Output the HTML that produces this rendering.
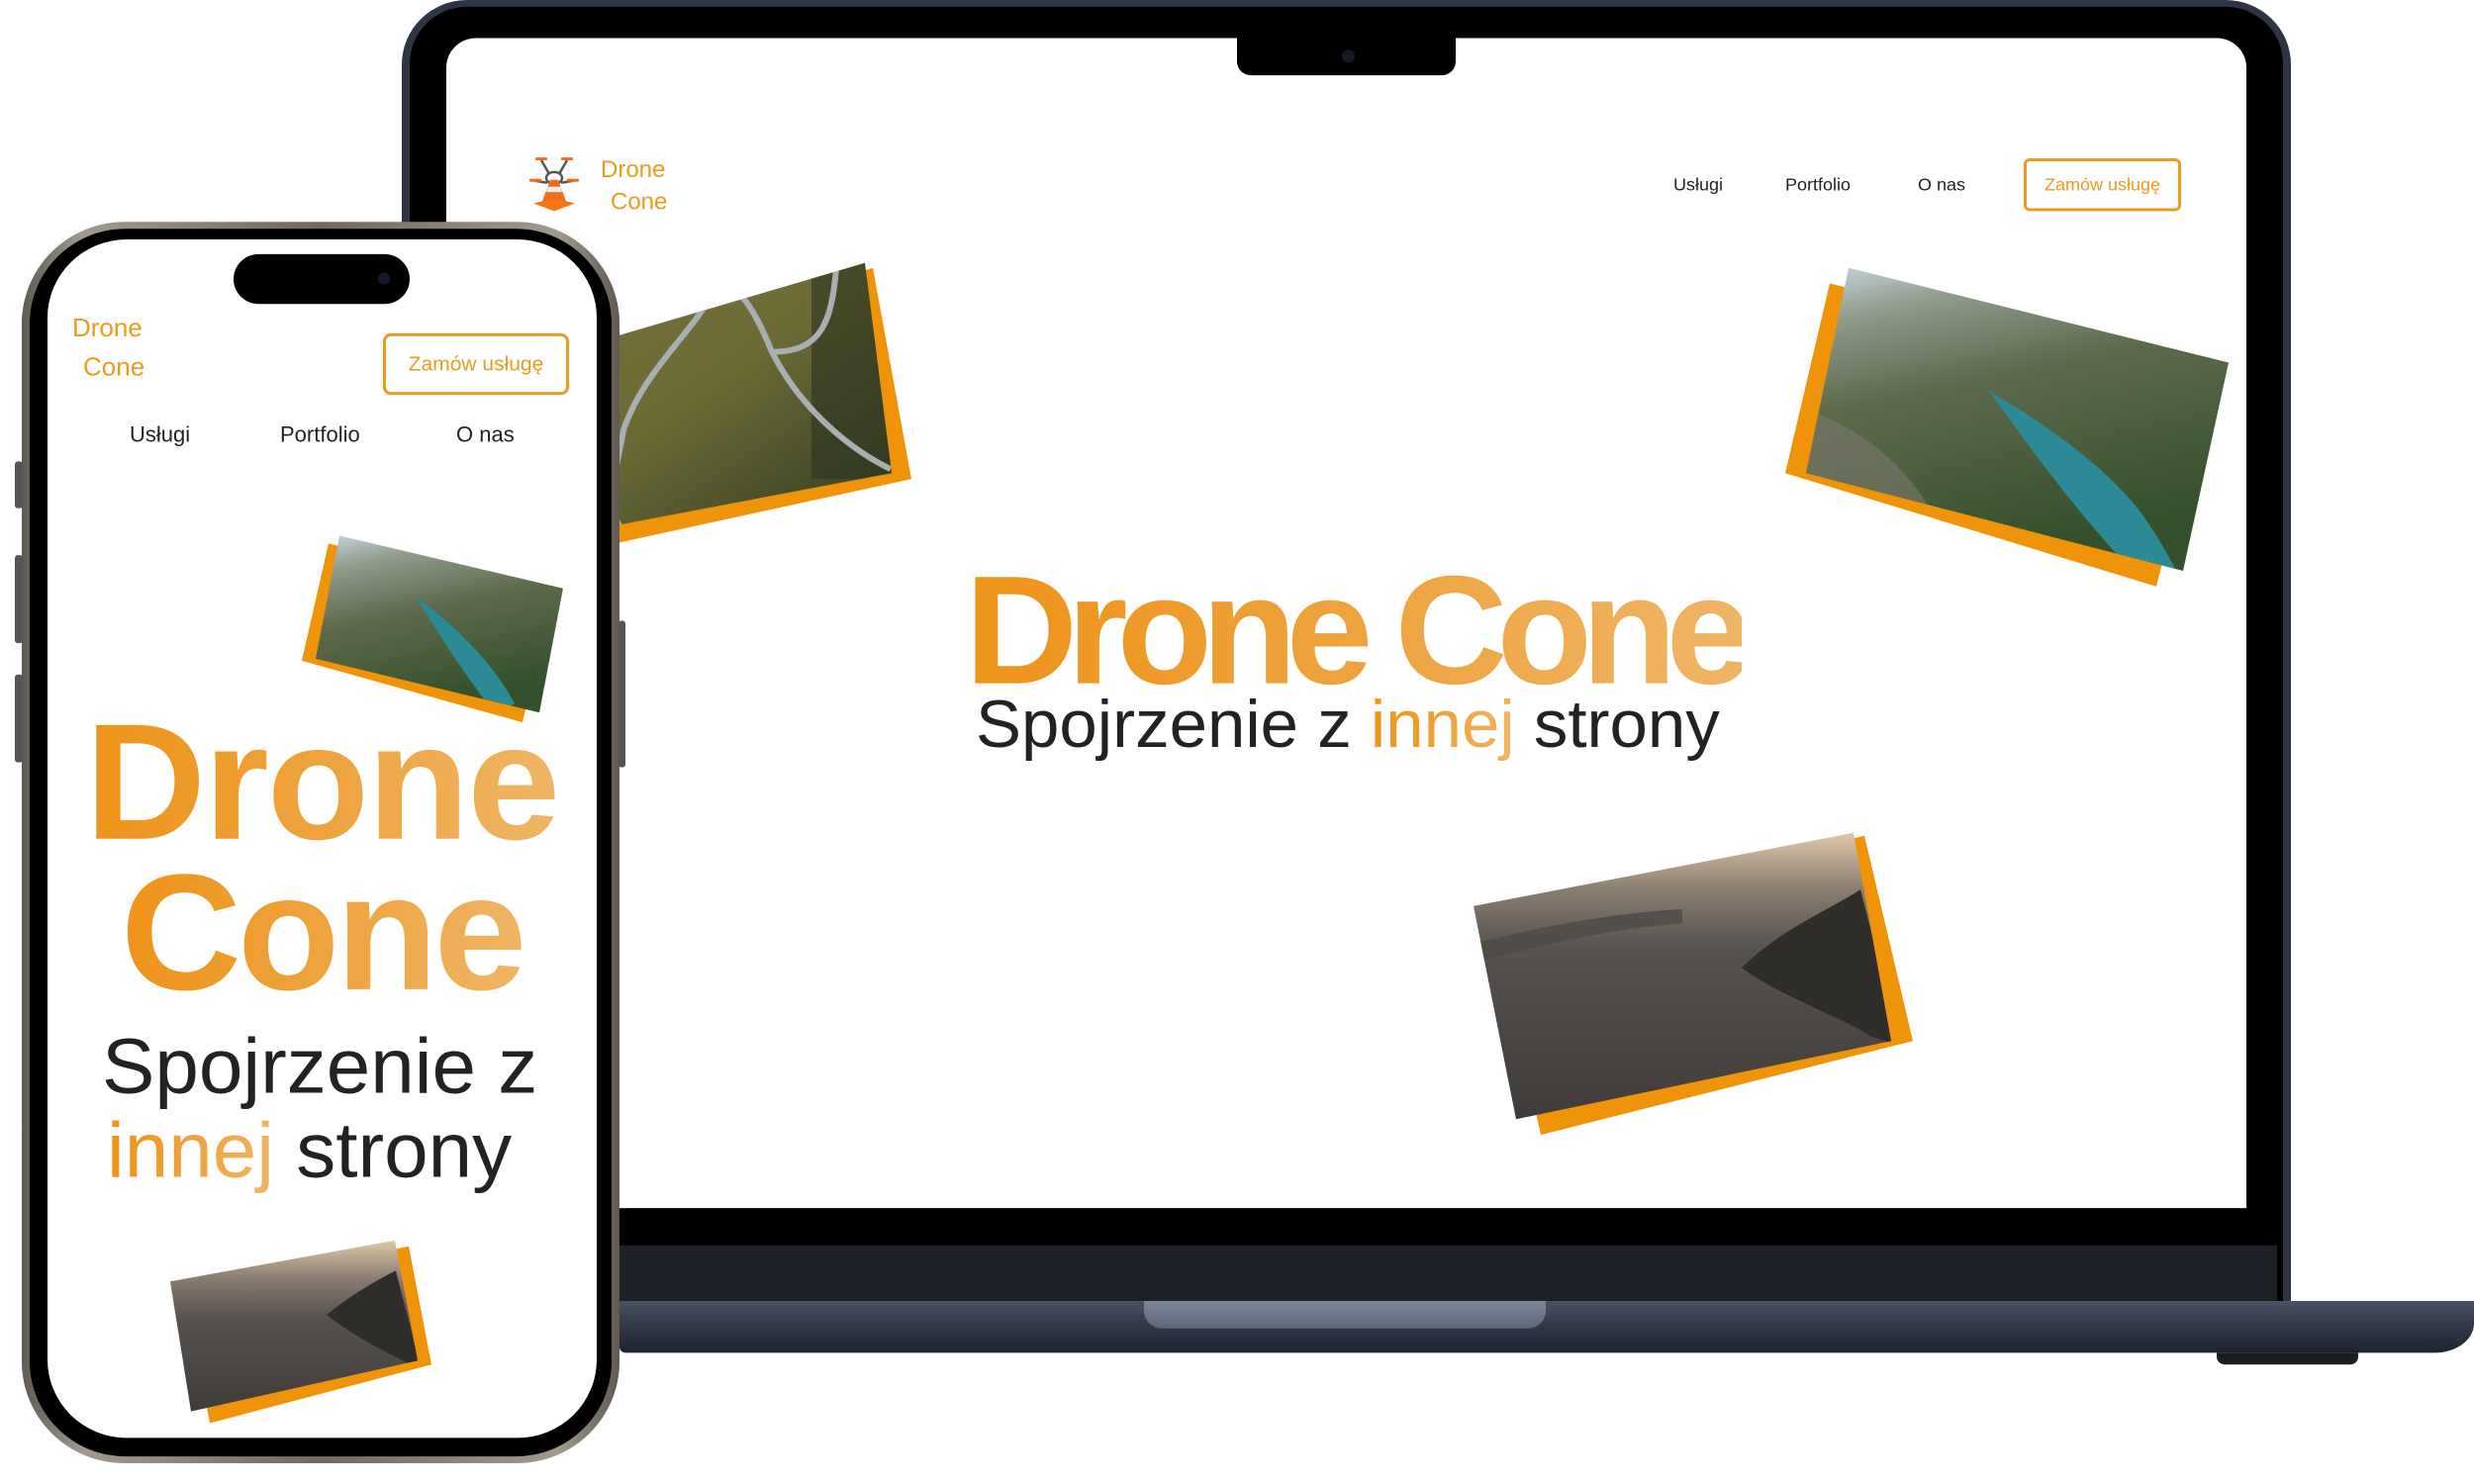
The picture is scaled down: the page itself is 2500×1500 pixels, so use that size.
<!DOCTYPE html>
<html><head><meta charset="utf-8">
<style>
*{margin:0;padding:0;box-sizing:border-box}
html,body{width:2500px;height:1500px;background:#fff;overflow:hidden;position:relative;font-family:"Liberation Sans",sans-serif}
#w{position:absolute;left:0;top:0;width:2500px;height:1520px;transform:scaleY(0.988);transform-origin:0 0}
.abs{position:absolute}
.grad{background:linear-gradient(90deg,#ee9318,#efb464);-webkit-background-clip:text;background-clip:text;color:transparent}
.or{color:#ee9a1e}
</style></head><body><div id="w">

<div class="abs" style="left:406px;top:0;width:1909px;height:1331px;border-radius:66px 66px 0 0;background:#2e3444"></div>
<div class="abs" style="left:414px;top:7px;width:1893px;height:1324px;border-radius:58px 58px 0 0;background:#000"></div>
<div class="abs" style="left:420px;top:1274px;width:1881px;height:57px;background:#1d2027"></div>
<div class="abs" style="left:451px;top:39px;width:1819px;height:1197px;border-radius:30px 30px 0 0;background:#fff;overflow:hidden">
  <div class="abs" style="left:799px;top:0;width:221px;height:38px;background:#000;border-radius:0 0 14px 14px"></div>
  <div class="abs" style="left:905px;top:12px;width:13px;height:13px;border-radius:50%;background:#151a26"></div>
</div>
<div class="abs" style="left:626px;top:1331px;width:1874px;height:53px;background:linear-gradient(180deg,#4a5366 0%,#353c4b 40%,#1e2330 100%);border-radius:0 0 40px 6px/0 0 30px 6px"></div>
<div class="abs" style="left:1156px;top:1331px;width:406px;height:28px;background:linear-gradient(180deg,#7c869a,#5e677a);border-radius:0 0 18px 18px"></div>
<div class="abs" style="left:2240px;top:1384px;width:143px;height:12px;background:#1a1d24;border-radius:0 0 8px 8px"></div>

<svg class="abs" style="left:533px;top:158px" width="54" height="58" viewBox="0 0 54 58">
  <g stroke="#555" stroke-width="2.5" fill="none"><path d="M14 6 L22 20 M40 6 L32 20 M8 27 L20 29 M46 27 L34 29"/><ellipse cx="27" cy="24" rx="8" ry="6"/></g>
  <g fill="#f26a1b"><rect x="8" y="3" width="12" height="3" rx="1"/><rect x="34" y="3" width="12" height="3" rx="1"/><rect x="2" y="25" width="12" height="3" rx="1"/><rect x="40" y="25" width="12" height="3" rx="1"/></g>
  <path d="M23 26 L31 26 L39 48 L15 48Z" fill="#f26a1b"/>
  <path d="M20.5 33 L33.5 33 L35 38.5 L19 38.5Z" fill="#eee"/>
  <path d="M6 50 L27 45 L48 50 L27 58Z" fill="#f27514"/>
</svg>
<div class="abs or" style="left:607px;top:159px;font-size:24px;line-height:30px">Drone</div>
<div class="abs or" style="left:617px;top:192px;font-size:24px;line-height:30px">Cone</div>

<div class="abs" style="left:1691px;top:179px;font-size:18px;color:#222">Usługi</div>
<div class="abs" style="left:1804px;top:179px;font-size:18px;color:#222">Portfolio</div>
<div class="abs" style="left:1938px;top:179px;font-size:18px;color:#222">O nas</div>
<div class="abs" style="left:2045px;top:162px;width:159px;height:54px;border:3px solid #ee9a1e;border-radius:6px;font-size:18px;color:#ee9a1e;text-align:center;line-height:48px">Zamów usługę</div>

<div class="abs grad" style="left:975px;top:555px;font-size:158px;font-weight:bold;letter-spacing:-11px;line-height:180px;white-space:nowrap">Drone Cone</div>
<div class="abs" style="left:986px;top:696px;font-size:69px;color:#222;white-space:nowrap;line-height:90px">Spojrzenie z <span class="grad">innej</span> strony</div>

<svg class="abs" style="left:0;top:0" width="2500" height="1500">
<defs>
  <linearGradient id="road" x1="0" y1="0" x2="1" y2="1"><stop offset="0" stop-color="#7b7443"/><stop offset=".5" stop-color="#6c6a35"/><stop offset="1" stop-color="#2f3a22"/></linearGradient>
  <linearGradient id="lake" x1="0" y1="0" x2="0.3" y2="1"><stop offset="0" stop-color="#c9d8e2"/><stop offset=".18" stop-color="#8f9a8a"/><stop offset=".45" stop-color="#5d6a4c"/><stop offset="1" stop-color="#34502c"/></linearGradient>
  <linearGradient id="bay" x1="0" y1="0" x2="0" y2="1"><stop offset="0" stop-color="#e0c8a8"/><stop offset=".2" stop-color="#8a7d70"/><stop offset=".4" stop-color="#575350"/><stop offset="1" stop-color="#3e3c3a"/></linearGradient>
  <clipPath id="c1"><polygon points="478,387 874,269 901,484 526,556"/></clipPath>
  <clipPath id="c2"><polygon points="1868,274 2252,371 2206,584 1825,484"/></clipPath>
  <clipPath id="c3"><polygon points="1489,927 1873,852 1911,1065 1532,1145"/></clipPath>
</defs>
<polygon points="490,400 882,274 921,490 540,574" fill="#ef9309"/>
<polygon points="478,387 874,269 901,484 526,556" fill="url(#road)"/>
<g clip-path="url(#c1)" fill="none" stroke="#a9aeb0" stroke-width="6">
  <rect x="820" y="260" width="90" height="230" fill="#2b3320" stroke="none" opacity=".6"/>
  <path d="M630 440 C650 380 700 340 720 300 C740 280 760 310 780 360 C810 420 860 460 900 480"/>
  <path d="M630 440 C620 500 600 540 660 560"/>
  <path d="M845 275 C840 330 830 360 780 360"/>
</g>
<polygon points="1849,290 2232,387 2179,600 1804,484" fill="#ef9309"/>
<polygon points="1868,274 2252,371 2206,584 1825,484" fill="url(#lake)"/>
<g clip-path="url(#c2)">
  <path d="M2010 400 C2060 430 2120 470 2160 520 C2190 560 2200 590 2210 600 L2170 600 C2130 560 2080 500 2010 400Z" fill="#2d8a97"/>
  <path d="M1830 420 C1880 440 1920 470 1950 520 L1900 520 L1825 490Z" fill="#7c7a6c" opacity=".6"/>
</g>
<polygon points="1510,945 1884,855 1933,1065 1557,1161" fill="#ef9309"/>
<polygon points="1489,927 1873,852 1911,1065 1532,1145" fill="url(#bay)"/>
<g clip-path="url(#c3)">
  <path d="M1760 990 C1800 950 1850 930 1880 910 L1920 1070 L1890 1060 C1860 1040 1800 1020 1760 990Z" fill="#2f2d2a"/>
  <path d="M1490 965 C1550 950 1620 935 1700 930 L1700 945 C1620 950 1550 970 1490 985Z" fill="#4e4a46" opacity=".8"/>
</g>
</svg>

<div class="abs" style="left:22px;top:227px;width:604px;height:1270px;border-radius:104px;background:linear-gradient(90deg,#5e5a52,#a09a8e 10%,#6e6a62 50%,#a09a8e 90%,#5e5a52)"></div>
<div class="abs" style="left:30px;top:234px;width:588px;height:1256px;border-radius:97px;background:#000"></div>
<div class="abs" style="left:15px;top:472px;width:8px;height:48px;background:#555;border-radius:3px"></div>
<div class="abs" style="left:15px;top:568px;width:8px;height:90px;background:#555;border-radius:3px"></div>
<div class="abs" style="left:15px;top:690px;width:8px;height:90px;background:#555;border-radius:3px"></div>
<div class="abs" style="left:625px;top:635px;width:7px;height:150px;background:#555;border-radius:3px"></div>
<div class="abs" style="left:48px;top:245px;width:555px;height:1226px;border-radius:80px;background:#fff;overflow:hidden">
  <div class="abs" style="left:188px;top:15px;width:178px;height:51px;border-radius:26px;background:#000"></div>
  <div class="abs" style="left:334px;top:34px;width:12px;height:12px;border-radius:50%;background:#141a2a"></div>
</div>
<div class="abs or" style="left:73px;top:318px;font-size:26px;line-height:34px">Drone</div>
<div class="abs or" style="left:84px;top:358px;font-size:26px;line-height:34px">Cone</div>
<div class="abs" style="left:387px;top:341px;width:188px;height:63px;border:3px solid #ee9a1e;border-radius:8px;font-size:21px;color:#ee9a1e;text-align:center;line-height:57px">Zamów usługę</div>
<div class="abs" style="left:131px;top:432px;font-size:22px;color:#222">Usługi</div>
<div class="abs" style="left:283px;top:432px;font-size:22px;color:#222">Portfolio</div>
<div class="abs" style="left:461px;top:432px;font-size:22px;color:#222">O nas</div>

<div class="abs grad" style="left:86px;top:705px;font-size:169px;font-weight:bold;line-height:190px;letter-spacing:-2px">Drone</div>
<div class="abs grad" style="left:122px;top:859px;font-size:169px;font-weight:bold;line-height:190px;letter-spacing:-4px">Cone</div>
<div class="abs" style="left:103px;top:1041px;font-size:80px;color:#222;line-height:100px;white-space:nowrap">Spojrzenie z</div>
<div class="abs" style="left:108px;top:1127px;font-size:80px;color:#222;line-height:100px;white-space:nowrap"><span class="grad">innej</span> strony</div>

<svg class="abs" style="left:0;top:0" width="700" height="1500">
<defs>
  <linearGradient id="lake2" x1="0" y1="0" x2="0.3" y2="1"><stop offset="0" stop-color="#c9d8e2"/><stop offset=".2" stop-color="#8f9a8a"/><stop offset=".5" stop-color="#5d6a4c"/><stop offset="1" stop-color="#34502c"/></linearGradient>
  <linearGradient id="bay2" x1="0" y1="0" x2="0" y2="1"><stop offset="0" stop-color="#e0c8a8"/><stop offset=".22" stop-color="#8a7d70"/><stop offset=".45" stop-color="#575350"/><stop offset="1" stop-color="#3e3c3a"/></linearGradient>
  <clipPath id="p1"><polygon points="343,548 569,602 545,729 319,674"/></clipPath>
  <clipPath id="p2"><polygon points="172,1311 399,1269 422,1392 193,1444"/></clipPath>
</defs>
<polygon points="332,556 558,612 528,739 305,676" fill="#ef9309"/>
<polygon points="343,548 569,602 545,729 319,674" fill="url(#lake2)"/>
<g clip-path="url(#p1)"><path d="M420 610 C460 640 500 680 520 720 L500 730 C470 690 450 660 420 610Z" fill="#2d8a97"/></g>
<polygon points="186,1321 413,1275 436,1396 212,1456" fill="#ef9309"/>
<polygon points="172,1311 399,1269 422,1392 193,1444" fill="url(#bay2)"/>
<g clip-path="url(#p2)"><path d="M330 1345 C355 1325 380 1310 400 1300 L425 1400 C390 1385 355 1365 330 1345Z" fill="#2f2d2a"/></g>
</svg>
</div></body></html>
